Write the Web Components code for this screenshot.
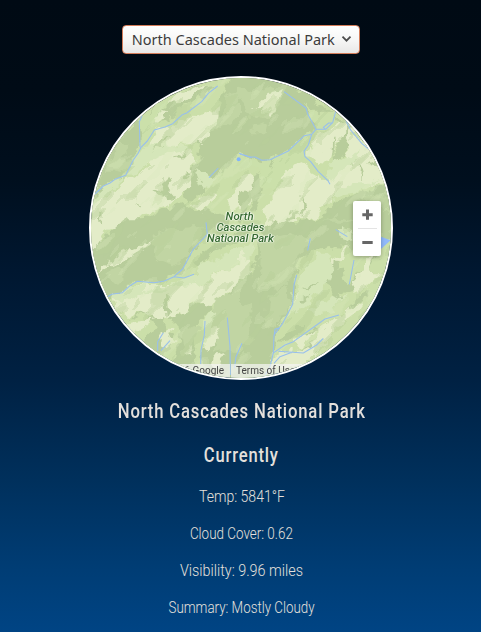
<!DOCTYPE html>
<html lang="en">
<head>
<meta charset="utf-8">
<title>National Park Weather</title>
<style>
html{height:100%}
body{margin:0;height:632px;overflow:hidden;background:linear-gradient(#000a14 0,#000b16 90px,#000f1e 180px,#001730 270px,#002143 380px,#00305c 480px,#003d75 570px,#004484 632px)}
</style>
</head>
<body>
<weather-page></weather-page>
<script>
const define = (name, html, ready) => customElements.define(name, class extends HTMLElement {
  connectedCallback() {
    if (this.shadowRoot) return;
    this.attachShadow({ mode: 'open' }).innerHTML = html;
    if (ready) ready(this);
  }
});

// Condenses its text horizontally to the width given in the attribute.
define('fit-text', `<style>
:host{display:flex;justify-content:center;white-space:nowrap}
span{display:block;flex:none;transform-origin:50% 50%}
</style><span><slot></slot></span>`, el => {
  const s = el.shadowRoot.querySelector('span');
  s.style.transform = 'scaleX(' + Number(el.getAttribute('width')) / s.getBoundingClientRect().width + ')';
});

define('park-select', `<style>
:host{display:flex;box-sizing:border-box;width:238px;height:29px;align-items:center;border:1px solid #d47c59;border-radius:4px;background:linear-gradient(#fff,#f7f7f6 50%,#e9e8e7);color:#3c3c3c;font:15.2px/20px "Noto Sans","Open Sans",sans-serif;padding:0 7px 2px 9px;justify-content:space-between}
div{width:203px}
svg{width:11px;height:8px;display:block}
</style><div><fit-text width="203"><slot></slot></fit-text></div>
<svg viewBox="0 0 11 8"><path d="M1.5 1.7 5.5 5.7 9.5 1.7" fill="none" stroke="#4c4c4c" stroke-width="1.8"/></svg>`);

define('zoom-control', `<style>
:host{display:flex;flex-direction:column;align-items:center;width:28px;height:55px;background:#fff;border-radius:2px;box-shadow:0 1px 4px rgba(0,0,0,.3)}
svg{display:block;width:28px;height:27px}
hr{width:19px;height:1px;border:0;margin:0;background:#e4e4e4}
</style>
<svg viewBox="0 0 28 27"><path d="M9.3 13.7H19.7M14.5 8.5V18.8" stroke="#666" stroke-width="3"/></svg><hr>
<svg viewBox="0 0 28 27"><path d="M9.3 13.5H19.7" stroke="#666" stroke-width="3"/></svg>`);

define('terrain-layer', `<style>:host{display:block;width:300px;height:300px}svg{display:block}
.d{fill:#b8cd9b}.m{fill:#c1d5a3}.l{fill:#e3ecc8}.g{fill:#cbe0aa}.h{fill:#d5e6b9}
.r{fill:none;stroke:#98bfed;stroke-width:3.2;stroke-linejoin:round}</style>
<svg width="300" height="300" viewBox="91 78 300 300">
<defs>
<filter id="rough" filterUnits="userSpaceOnUse" x="60" y="50" width="360" height="360" color-interpolation-filters="sRGB">
<feTurbulence type="fractalNoise" baseFrequency=".09" numOctaves="3" seed="4"/>
<feDisplacementMap in="SourceGraphic" scale="13" xChannelSelector="R" yChannelSelector="G"/>
</filter>
<filter id="slopes" filterUnits="userSpaceOnUse" x="0" y="0" width="500" height="500" color-interpolation-filters="sRGB">
<feTurbulence type="fractalNoise" baseFrequency=".028 .075" numOctaves="3" seed="11"/>
<feColorMatrix values="0 0 0 0 .72  0 0 0 0 .81  0 0 0 0 .60  6 0 0 0 -3.4"/>
<feComponentTransfer><feFuncA type="discrete" tableValues="0 .45 .65"/></feComponentTransfer>
</filter>
<filter id="sun" filterUnits="userSpaceOnUse" x="0" y="0" width="500" height="500" color-interpolation-filters="sRGB">
<feTurbulence type="fractalNoise" baseFrequency=".028 .08" numOctaves="3" seed="29"/>
<feColorMatrix values="0 0 0 0 .86  0 0 0 0 .92  0 0 0 0 .75  6 0 0 0 -3.5"/>
<feComponentTransfer><feFuncA type="discrete" tableValues="0 .3 .45"/></feComponentTransfer>
</filter>
</defs>
<rect x="91" y="78" width="300" height="300" fill="#cbdfa9"/>
<g filter="url(#rough)">
<!-- north-west -->
<g transform="translate(85 70) scale(.33333)">
<path class="d" d="M0 400 60 290 90 220 165 140 163 232 120 315 70 340ZM190 120 330 50 400 45 340 85 300 110 250 130 210 165 180 175ZM500 0 440 20 400 95 385 170 345 215 340 260 320 290 318 350 290 370 310 405 345 375 365 345 410 300 440 265 500 225Z"/>
<path class="m" d="M60 290 105 215 140 220 110 260 150 280 110 305ZM420 80 500 60 500 120 450 150 415 170 390 190 420 130Z"/>
<path class="l" d="M205 145 230 120 255 128 240 145 210 160ZM230 100 300 65 365 45 300 95ZM400 105 395 160 350 215 320 222 240 228 190 225 215 182 270 162 320 140 370 130ZM180 270 250 240 330 240 320 290 325 340 290 370 240 410 190 430 120 470 0 500 30 400 120 335 160 310 190 290ZM315 410 350 380 400 365 380 400 350 420ZM420 390 460 360 500 330 500 400 440 425Z"/>
<path class="h" d="M170 240 210 215 300 230 330 235 245 250 200 275 150 305 110 330 60 375 20 420 35 360 120 320ZM330 300 380 325 410 310 370 350 350 350Z"/>
<path class="d" d="M195 245 225 208 255 205 230 222ZM258 268 310 240 285 265ZM155 410 148 385 165 425ZM205 370 240 350 270 385 250 390 225 375ZM230 340 250 320 260 348 245 360ZM300 305 312 325 295 325ZM40 430 50 420 47 490ZM230 155 250 130 280 115 250 150ZM100 500 120 470 190 440 240 415 290 405 310 418 390 425 430 450 430 500Z"/>
<path class="m" d="M250 460 330 450 385 465 400 500 240 500Z"/>
<path class="g" d="M170 145 205 110 260 85 220 125 200 170 210 180 170 225Z"/>
</g>
<!-- north-east -->
<g transform="translate(240 70) scale(.33333)">
<path class="d" d="M0 -30 60 0 135 30 185 85 200 115 225 180 190 198 145 243 70 270 0 252ZM160 60 230 80 240 110 285 125 220 125ZM280 140 340 180 325 205 315 220 315 255 285 290 280 260 300 215 300 180ZM50 300 65 305 65 360 45 430 35 380 20 430 0 455 0 390 25 350 40 320ZM190 290 205 325 190 320ZM360 270 370 290 358 330ZM130 500 165 455 240 440 280 395 335 378 375 370 440 330 500 320 500 500Z"/>
<path class="m" d="M0 50 60 65 90 45 120 100 90 140 35 140 0 90ZM40 170 85 160 80 190 35 190ZM360 390 440 350 450 430 420 400ZM205 475 280 440 340 450 360 500 190 500Z"/>
<path class="g" d="M205 125 250 130 285 125 272 160 230 180ZM0 260 70 275 140 250 195 205 205 190 195 260 165 275 130 310 110 360 70 360 65 300 35 285 0 300Z"/>
<path class="l" d="M40 115 80 75 135 60 105 105 100 130 85 135 90 115 65 125 70 105ZM205 260 215 215 230 195 290 165 315 160 325 180 300 210 280 240 270 280 235 275ZM315 225 330 180 395 235 440 325 380 355 330 370 290 375 260 400 220 440 190 450 170 440 140 475 95 500 65 430 105 380 115 325 160 280 190 270 215 310 265 340 260 310 300 290 320 260ZM0 320 35 310 45 340 15 370 0 390Z"/>
<path class="d" d="M280 205 288 220 276 265ZM185 370 197 400 182 440ZM160 420 178 430 150 440 140 470 130 460 145 430ZM95 275 108 260 87 310ZM322 290 330 260 345 250 335 290ZM360 280 375 305 358 330ZM420 270 430 290 380 285Z"/>
<path class="h" d="M250 300 310 265 360 240 330 290 300 300 270 340ZM300 360 340 340 390 340 420 325 360 370 310 375 280 390Z"/>
</g>
<!-- south-west -->
<g transform="translate(85 225) scale(.33333)">
<path class="d" d="M10 75 90 10 120 -20 390 -20 365 25 330 70 295 130 270 155 205 172 150 170 110 205 60 225 35 180ZM175 350 215 300 185 285 205 265 240 265 230 290 240 310 265 330 255 375 215 400ZM250 280 300 265 330 240 365 235 385 250 330 300 335 350 320 410 350 460 260 445 280 350 290 310ZM380 340 400 280 380 260 430 200 500 130 500 480 330 480 370 420 345 390ZM175 215 200 200 180 240Z"/>
<path class="m" d="M200 30 270 10 360 5 340 55 310 70 325 80 280 120 210 105ZM60 150 100 120 120 150 90 180ZM385 220 450 205 500 170 500 330 460 390 430 370 390 380ZM290 315 325 300 345 310 310 385 295 390Z"/>
<path class="l" d="M-10 0 90 0 55 30 30 70 0 85ZM35 140 90 90 165 65 205 45 195 60 120 105ZM80 215 160 180 250 180 330 180 415 140 500 100 500 140 430 200 370 240 330 235 300 265 245 280 180 265 130 270 95 255ZM120 300 180 285 210 275 190 300 145 330ZM355 350 385 310 410 305 390 345 370 380 355 375ZM225 330 260 300 250 340 275 340 235 375ZM310 370 325 360 315 395ZM390 390 420 380 395 430 380 440Z"/>
<path class="h" d="M330 110 390 100 470 65 500 60 500 100 390 150 330 180 250 185 310 150 340 150ZM75 215 130 185 180 180 180 195 210 185 250 195 230 205 180 200 110 235ZM350 290 375 260 400 270 380 320 360 350Z"/>
<path class="d" d="M240 220 250 210 255 255 245 280ZM125 280 200 255 150 280ZM320 115 370 70 430 35 500 0 500 30 420 65 370 90 330 130Z"/>
</g>
<!-- south-east -->
<g transform="translate(240 225) scale(.33333)">
<path class="d" d="M50 10 110 -10 420 -10 400 40 340 70 300 60 250 60 210 80 100 100ZM0 190 30 170 50 100 55 40 100 0 340 0 300 70 270 60 220 75 175 110 165 160 155 240 110 310 100 390 90 460 0 480ZM260 170 280 110 300 100 310 170 330 180 350 140 420 80 370 190 320 205ZM115 345 175 300 205 300 150 350ZM230 310 280 290 295 295 250 320 200 330ZM330 240 390 190 370 230 320 260ZM160 380 220 350 250 345 220 375Z"/>
<path class="m" d="M60 55 150 30 210 50 200 75 170 90 155 160 110 200 80 170 55 210ZM0 240 30 230 35 350 0 360ZM85 220 140 180 150 240 100 310 75 300Z"/>
<path class="l" d="M0 75 15 100 10 140 0 155ZM170 205 215 150 185 140 245 100 240 120 200 155 220 180 240 195 190 225 160 235ZM270 130 300 80 325 50 310 95ZM335 180 360 130 415 70 390 145 430 145 350 210ZM235 310 295 270 370 235 350 265 290 310 240 355 190 380 140 415 90 440 110 390 180 380 235 345ZM100 400 150 380 260 350 190 420 110 430ZM145 350 180 335 230 325 180 365Z"/>
<path class="h" d="M180 150 240 80 270 80 280 140 250 190 190 245 140 280 170 220ZM200 250 280 210 320 210 280 260 230 270ZM300 10 340 15 340 45 300 30Z"/>
<path class="d" d="M260 170 290 150 310 220 275 210ZM190 190 235 165 210 190ZM180 225 215 210 190 230Z"/>
</g>
</g>
<g transform="translate(64 228) rotate(-48) translate(-72 -112)" opacity=".75"><rect width="500" height="500" filter="url(#slopes)"/><rect width="500" height="500" filter="url(#sun)"/></g>
<!-- rivers and lakes -->
<g transform="translate(85 70) scale(.33333)">
<path class="r" d="M30 372 55 348 75 339 90 328 122 316 145 270 160 249 168 232 187 213 208 180 240 171 263 161 292 134 305 129 350 95 370 70 398 48M171 138 163 155 165 232M372 323 400 294M462 250 500 263"/>
<circle cx="461" cy="268" r="6" fill="#83b5fb"/></g>
<g transform="translate(240 70) scale(.33333)"><path class="r" d="M0 252 30 261 45 261 65 271 90 269 145 243 193 197 215 193 228 178 257 178 278 158 287 125M257 178 250 172 266 159 278 158M132 65 198 114 203 132 228 178M215 193 205 225 192 244 195 260 212 275 235 305 263 331 270 343M318 153 332 180 365 220 384 236"/></g>
<g transform="translate(85 225) scale(.33333)"><path class="r" d="M68 215 80 208 112 203 135 182 157 169 208 173 238 168 267 155 293 132 325 72 367 28 363-8M267 155 297 159 327 148M235 323 218 350 218 378M228 377 255 347M360 288 358 330 348 375 347 418M427 278 435 365 436 450M471 355 453 395 448 430"/></g>
<g transform="translate(240 225) scale(.33333)"><path class="r" d="M170 150 162 180 158 238 128 295 102 330 100 384 90 425 75 450M118 308 105 313 102 335M98 385 135 360 160 350 255 282 297 270M115 379 190 384 230 360 250 340M160 380 120 395 102 415M287 14 322 35M211 40 203 76M342 105 328 178"/><path d="M423 35 452 46 423 72Z" fill="#91b9fb"/></g>
</svg>`);

define('park-map', `<style>
:host{display:block;position:relative;box-sizing:border-box;width:304px;height:304px;border:2px solid #fff;border-radius:50%;overflow:hidden}
.label{position:absolute;left:99px;top:133px;width:100px;text-align:center;font:italic 500 11px/11px Roboto,sans-serif;color:#386b32;text-shadow:0 0 1px #fff,0 0 2px #fff,1px 0 1px #eef5df,-1px 0 1px #eef5df}
zoom-control{position:absolute;left:262px;top:123px}
.legal{position:absolute;left:70px;top:286px;display:flex;font:10px/13px Roboto,sans-serif;color:#444}
.legal div{box-sizing:border-box;height:14px;background:rgba(245,245,245,.7);overflow:hidden;white-space:nowrap}
.data{width:69px;display:flex;justify-content:flex-end;padding-right:6px}
.terms{margin-left:1px;width:100px;padding-left:5px}
</style>
<terrain-layer></terrain-layer>
<div class="label"><fit-text width="28">North</fit-text><fit-text width="48">Cascades</fit-text><fit-text width="67">National Park</fit-text></div>
<zoom-control></zoom-control>
<div class="legal"><div class="data">©2016 Google</div><div class="terms">Terms of Use</div></div>`);

define('weather-report', `<style>
:host{display:flex;flex-direction:column;align-items:center;color:#e4e0dc;font-family:Roboto,sans-serif}
h2{margin:0 0 20px;font-size:20px;line-height:24px;font-weight:500;letter-spacing:1px}
p{margin:0 0 17px;font-size:16px;line-height:20px;font-weight:300}
</style>
<h2><fit-text width="248">North Cascades National Park</fit-text></h2>
<h2><fit-text width="75">Currently</fit-text></h2>
<p><fit-text width="86">Temp: 5841°F</fit-text></p>
<p><fit-text width="103">Cloud Cover: 0.62</fit-text></p>
<p><fit-text width="123">Visibility: 9.96 miles</fit-text></p>
<p><fit-text width="146">Summary: Mostly Cloudy</fit-text></p>`);

define('weather-page', `<style>
:host{display:flex;flex-direction:column;align-items:center;padding-top:25px;width:482px}
park-map{margin:22px 0 19px}
weather-report{padding-left:1px}
</style>
<park-select>North Cascades National Park</park-select>
<park-map></park-map>
<weather-report></weather-report>`);
</script>
</body>
</html>
